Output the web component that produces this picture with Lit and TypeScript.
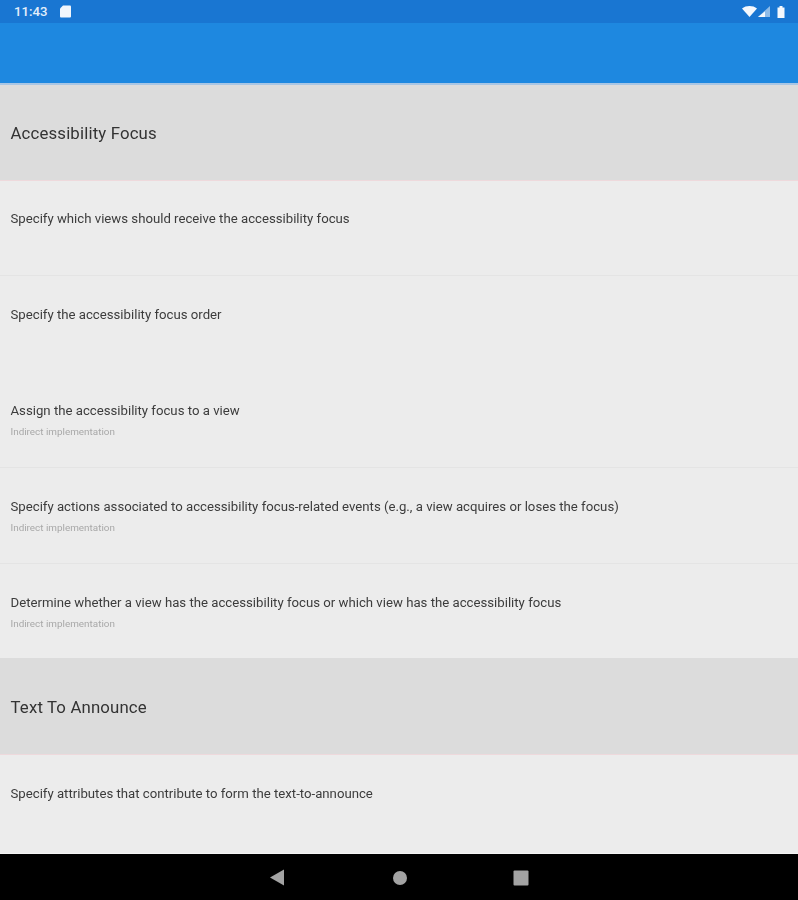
import { LitElement, html, css } from "lit";
import { customElement } from "lit/decorators.js";

type Row = { kind: "head" | "item"; text: string; sub?: boolean; line?: boolean; size?: string };

const rows: Row[] = [
  { kind: "head", text: "Accessibility Focus" },
  { kind: "item", text: "Specify which views should receive the accessibility focus", line: true },
  { kind: "item", text: "Specify the accessibility focus order", line: false },
  { kind: "item", text: "Assign the accessibility focus to a view", sub: true, line: true },
  { kind: "item", text: "Specify actions associated to accessibility focus-related events (e.g., a view acquires or loses the focus)", sub: true, line: true },
  { kind: "item", text: "Determine whether a view has the accessibility focus or which view has the accessibility focus", sub: true, size: "short" },
  { kind: "head", text: "Text To Announce", size: "tall" },
  { kind: "item", text: "Specify attributes that contribute to form the text-to-announce", size: "low" },
];

@customElement("app-root")
export class AppRoot extends LitElement {
  static styles = css`
    :host {
      display: flex;
      flex-direction: column;
      width: 798px;
      height: 900px;
      overflow: hidden;
      font-family: Roboto, "Liberation Sans", sans-serif;
      background: #ececec;
    }
    .status {
      height: 23px;
      flex: none;
      background: #1976d2;
      display: flex;
      align-items: center;
      justify-content: space-between;
      padding: 0 13px 0 14px;
      color: #e3eefa;
      font-size: 13.2px;
      font-weight: 500;
    }
    .left, .right { display: flex; align-items: center; }
    .left { gap: 12px; }
    .appbar {
      flex: none;
      background: #1e88e0;
      border-bottom: 2px solid #a9c6e4;
      box-sizing: border-box;
      height: 62px;
    }
    .list { flex: 1; min-height: 0; overflow: hidden; }
    .head {
      height: 95.5px;
      box-sizing: border-box;
      background: #dcdcdc;
      border-bottom: 1px solid #eed9dc;
      display: flex;
      align-items: center;
      padding: 1px 10.5px 0;
      font-size: 16.8px;
      color: #333;
      letter-spacing: 0.15px;
      filter: blur(0.3px);
    }
    .head.tall { height: 97px; }
    .item {
      height: 96px;
      box-sizing: border-box;
      padding: 30px 10.5px 0;
      background: #ececec;
      font-size: 13.2px;
      line-height: 16px;
      color: #3c3c3c;
    }
    .item.short { height: 93.5px; }
    .item.low { padding-top: 31px; }
    .item.line { height: 95px; margin-bottom: 1px; border-bottom: 1px solid #e4e4e4; }
    .label { filter: blur(0.3px); }
    .sub {
      margin-top: 7px;
      font-size: 9.9px;
      line-height: 12px;
      color: #a8a8a8;
      filter: blur(0.4px);
    }
    .nav {
      height: 47px;
      flex: none;
      background: #000;
      border-top: 1px solid #f4f4f4;
      box-sizing: border-box;
      display: flex;
      align-items: center;
      justify-content: center;
      gap: 107px;
      padding: 1px 0 0 0;
    }
    svg { display: block; }
    .battery { margin-left: 6px; }
    .square { margin-left: -2px; }
  `;

  render() {
    return html`
      <div class="status">
        <div class="left">
          <span>11:43</span>
          <svg width="12" height="13" viewBox="0 0 12 13"><path d="M4 0.5H11a1 1 0 0 1 1 1V11.5a1 1 0 0 1-1 1H2a1 1 0 0 1-1-1V3.5Z" fill="#f1f6fc"/></svg>
        </div>
        <div class="right">
          <svg width="15" height="11" viewBox="0 0 15 11"><path d="M0 2.5C4 -0.8 11 -0.8 15 2.5L7.5 11Z" fill="#f4f8fd"/></svg>
          <svg width="14" height="11" viewBox="0 0 12 11"><path d="M12 0V11H0Z" fill="#8fbce9"/><path d="M7 5.5V11H0Z" fill="#f4f8fd"/></svg>
          <svg class="battery" width="8" height="13" viewBox="1.5 0 8 13"><path d="M2 2.5h2V1h3v1.5h2V13H2Z" fill="#f4f8fd"/></svg>
        </div>
      </div>
      <div class="appbar"></div>
      <div class="list">
        ${rows.map((r) =>
          r.kind === "head"
            ? html`<div class="head ${r.size ?? ""}">${r.text}</div>`
            : html`<div class="item ${r.line ? "line" : ""} ${r.size ?? ""}">
                <div class="label">${r.text}</div>
                ${r.sub ? html`<div class="sub">Indirect implementation</div>` : ""}
              </div>`
        )}
      </div>
      <div class="nav">
        <svg width="16" height="17" viewBox="0 0 16 17"><path d="M15 0.5V16.5L1 8.5Z" fill="#a3a3a3"/></svg>
        <svg width="16" height="16" viewBox="0 0 16 16"><circle cx="8" cy="8" r="7" fill="#a3a3a3"/></svg>
        <svg class="square" width="16" height="16" viewBox="0 0 16 16"><rect x="0.5" y="0.5" width="15" height="15" rx="1" fill="#a3a3a3"/></svg>
      </div>
    `;
  }
}
